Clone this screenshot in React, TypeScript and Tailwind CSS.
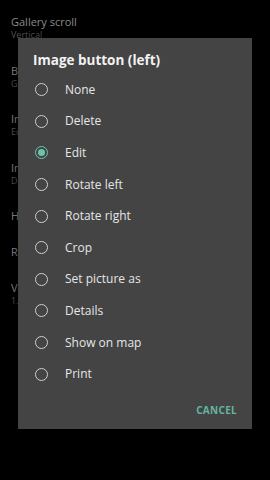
import React from "react"

const options = ["None", "Delete", "Edit", "Rotate left", "Rotate right", "Crop", "Set picture as", "Details", "Show on map", "Print"]

const settings = [
  { title: "Gallery scroll", sub: "Vertical" },
  { title: "Background color", sub: "Gray" },
  { title: "Image button (left)", sub: "Edit" },
  { title: "Image button (right)", sub: "Details" },
  { title: "Hide navigation bar", sub: "" },
  { title: "Remember position", sub: "" },
  { title: "Version", sub: "1.0.2" },
]

const Radio = ({ checked }: { checked: boolean }) => (
  <div
    className={`w-[13px] h-[13px] rounded-full border-[1.5px] flex items-center justify-center ${
      checked ? "border-[#6cc3ad]" : "border-[#cfcfcf]"
    }`}
  >
    {checked && <div className="w-[7px] h-[7px] rounded-full bg-[#6cc3ad]" />}
  </div>
)

export default function App() {
  return (
    <div className="relative w-[270px] h-[480px] bg-black overflow-hidden" style={{ fontFamily: '"Open Sans", "Noto Sans", sans-serif' }}>
      {/* settings list behind the dialog */}
      <div className="flex flex-col pl-[11px] pt-[14px]">
        {settings.map((s) => (
          <div key={s.title} className={`${s.sub ? "h-[48.5px]" : "h-[36px]"} flex flex-col`}>
            <span className="text-[11px] leading-[15px] text-[#8a8a8a]">{s.title}</span>
            {s.sub && <span className="text-[9px] leading-[12px] text-[#555555]">{s.sub}</span>}
          </div>
        ))}
      </div>

      {/* dialog */}
      <div className="absolute left-[18px] top-[38px] w-[234px] h-[391px] bg-[#444444] shadow-[0_2px_10px_rgba(0,0,0,0.6)] flex flex-col">
        <div className="pl-[15px] pt-[13px] h-[36px] text-[13.5px] leading-[18px] font-bold text-[#f2f2f2]">
          Image button (left)
        </div>
        <div className="flex flex-col">
          {options.map((o) => (
            <div key={o} className="h-[31.6px] flex items-center pl-[16.5px]">
              <Radio checked={o === "Edit"} />
              <span className="ml-[17.5px] text-[12px] text-[#e6e6e6]">{o}</span>
            </div>
          ))}
        </div>
        <div className="flex justify-end pr-[15px] pt-[13px]">
          <span className="text-[10px] font-bold tracking-[0.3px] text-[#63b5a0]">CANCEL</span>
        </div>
      </div>
    </div>
  )
}
